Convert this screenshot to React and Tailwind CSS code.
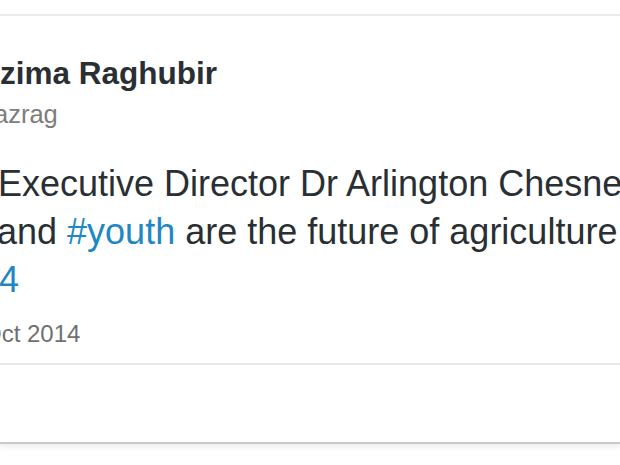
export default function App() {
  return (
    <div className="h-[465px] w-[620px] overflow-hidden bg-white font-['Liberation_Sans',Arial,sans-serif]">
      <div className="mt-[14px] border-t-2 border-b-2 border-t-[#ebebeb] border-b-[#c9c9c9] bg-white shadow-[0_3px_6px_rgba(0,0,0,0.08)]">
        <div className="overflow-hidden whitespace-nowrap pt-[39px]">
          <div className="text-[31.5px] font-bold leading-[36px] text-[#292f33]">
            zima Raghubir
          </div>
          <div className="mt-[8px] -ml-[6px] text-[25.5px] leading-[31px] text-[#7d7d7d]">
            azrag
          </div>

          <div className="mt-[30px] text-[36px] leading-[48px] text-[#292f33]">
            <div className="-ml-[2px]">Executive Director Dr Arlington Chesney</div>
            <div className="-ml-[3px]">
              and <span className="text-[#1f87c6]">#youth</span> are the future of agriculture
            </div>
            <div className="-ml-[1px] text-[#1f87c6]">4</div>
          </div>

          <div className="mt-[14px] -ml-[17px] text-[24px] leading-[32px] text-[#707070]">
            Oct 2014
          </div>
        </div>

        <div className="mt-[13px] h-[79px] border-t-2 border-[#e8e8e8]" />
      </div>
    </div>
  );
}
